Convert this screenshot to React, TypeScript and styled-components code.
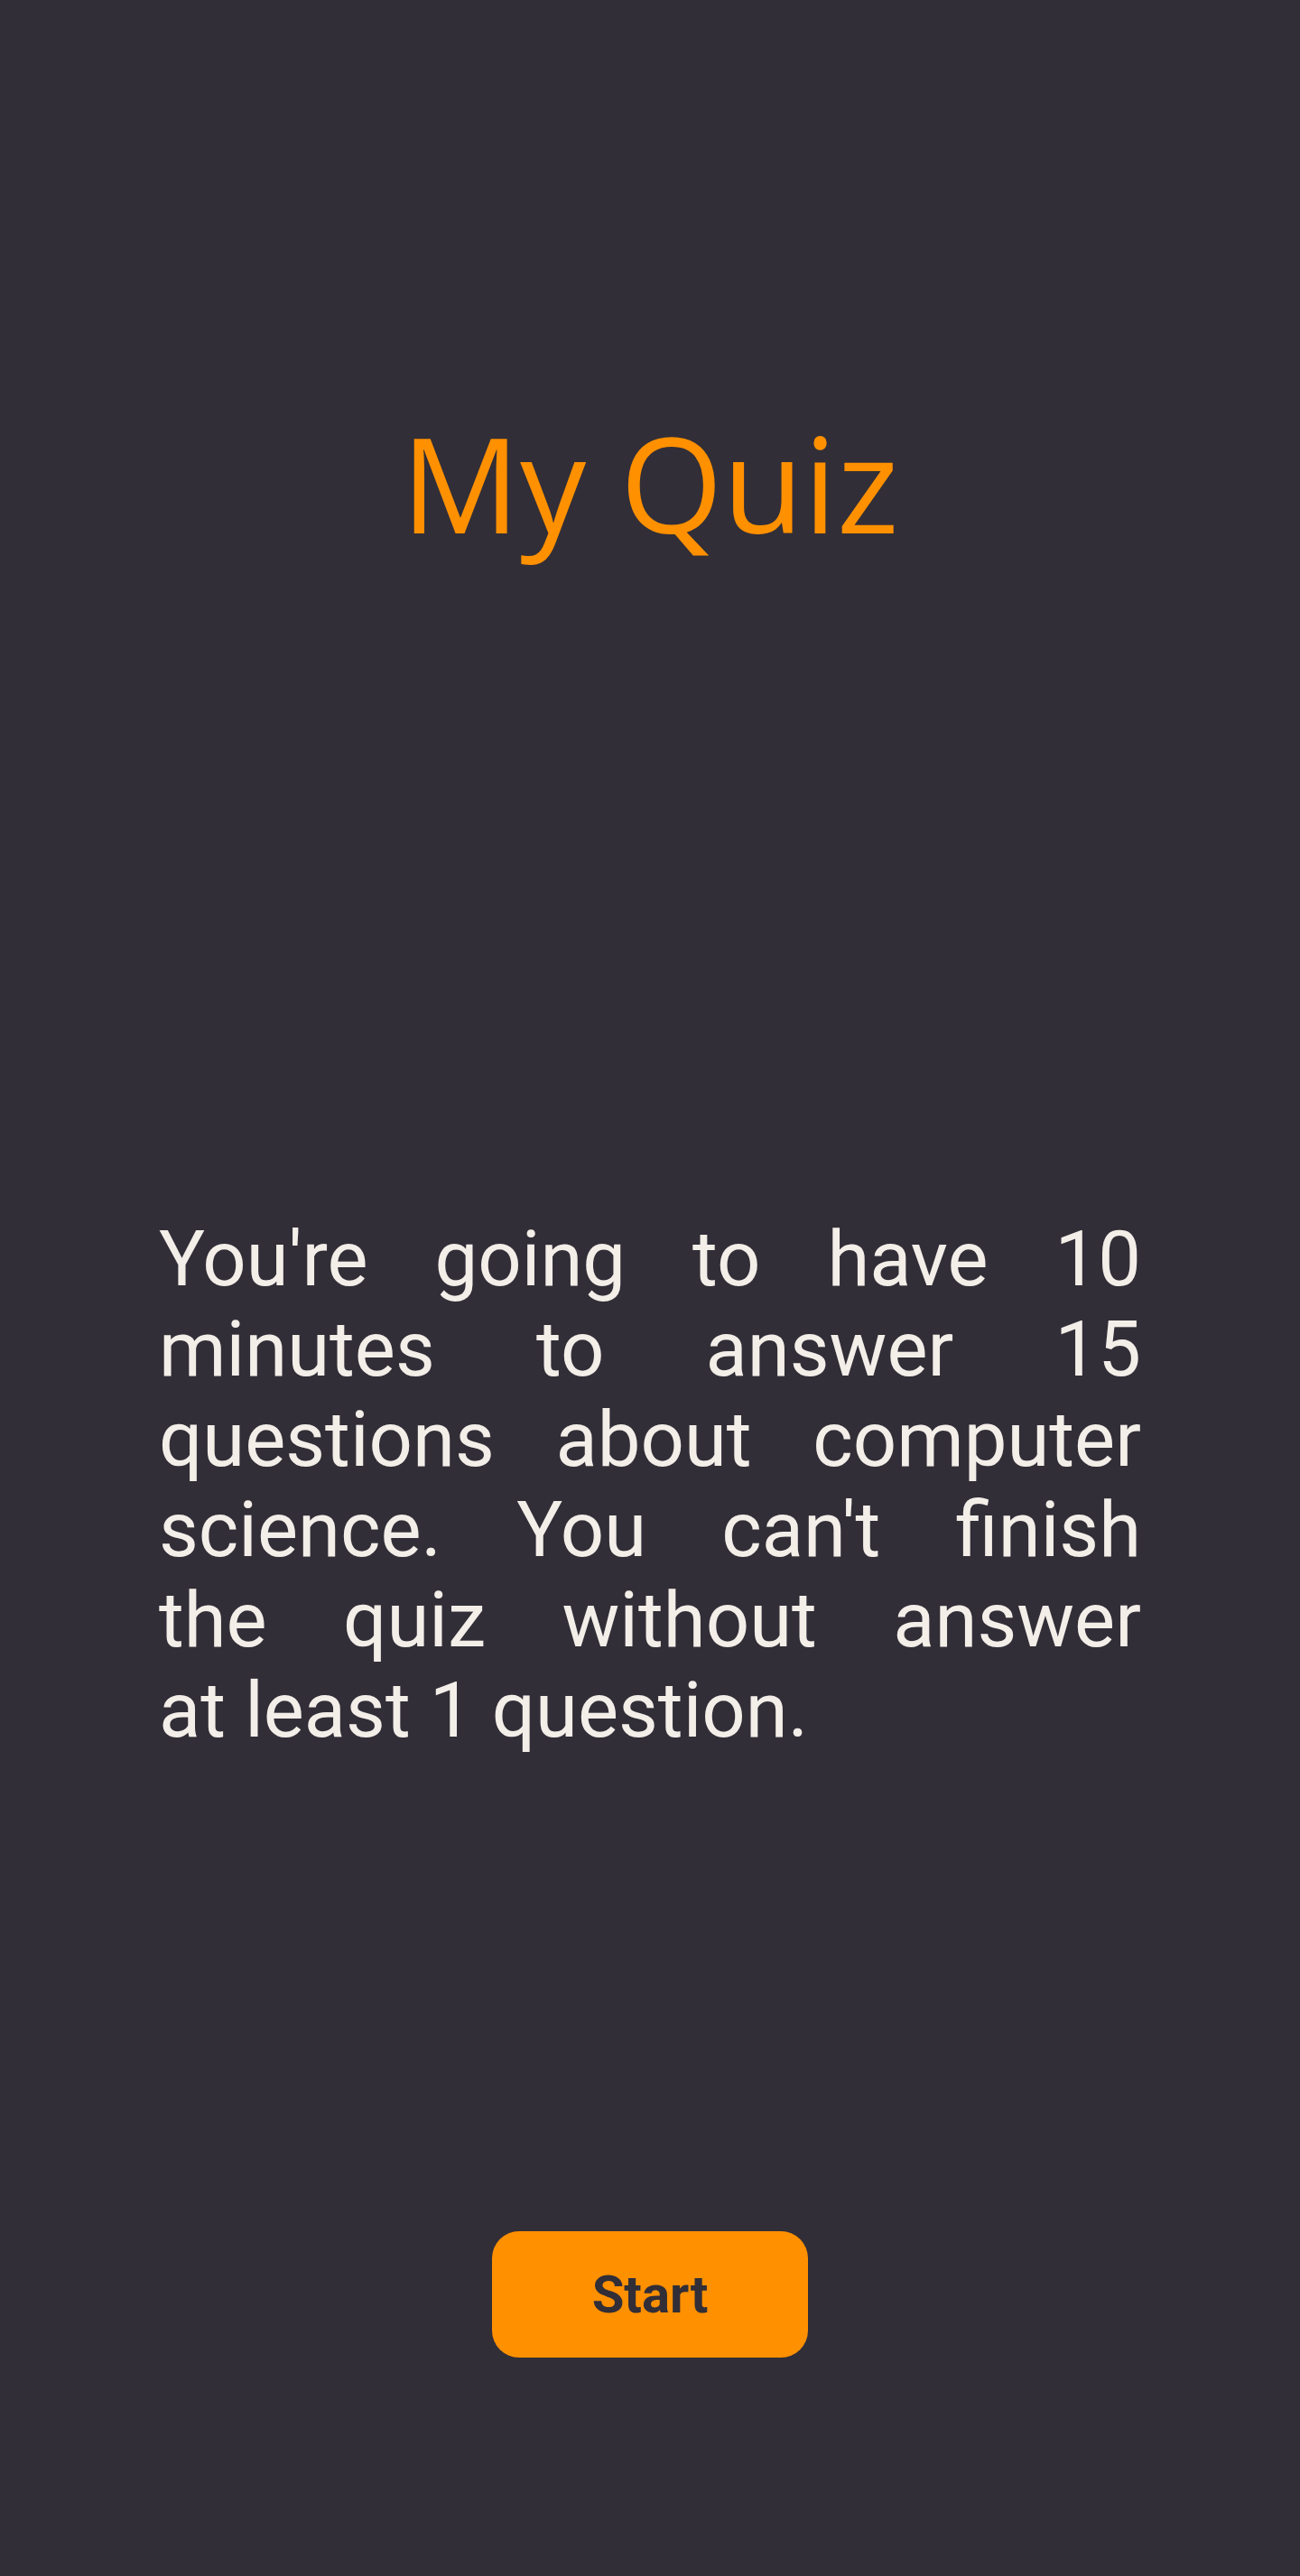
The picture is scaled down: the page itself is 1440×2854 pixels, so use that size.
import React from "react";
import styled, { createGlobalStyle } from "styled-components";

const GlobalStyle = createGlobalStyle`
  html, body {
    margin: 0;
    padding: 0;
    background: #312e37;
  }
  body {
    font-family: Roboto, "Liberation Sans", sans-serif;
  }
  * { box-sizing: border-box; }
`;

const Page = styled.main`
  min-height: 2854px;
  display: flex;
  flex-direction: column;
  align-items: center;
  padding-top: 435px;
  background: #312e37;
`;

const Title = styled.h1`
  margin: 0;
  font-family: "Open Sans", "Noto Sans", sans-serif;
  font-weight: 400;
  font-size: 146px;
  line-height: 200px;
  color: #ff9000;
`;

const Intro = styled.p`
  margin: 710px 0 0;
  width: 1088px;
  font-family: Roboto, "Liberation Sans", sans-serif;
  font-size: 85px;
  line-height: 100px;
  color: #f4eee9;
`;

const Line = styled.span<{ $last?: boolean }>`
  display: block;
  white-space: nowrap;
  text-align: ${(p) => (p.$last ? "left" : "justify")};
  text-align-last: ${(p) => (p.$last ? "left" : "justify")};
`;

const StartButton = styled.button`
  margin-top: 527px;
  width: 350px;
  height: 140px;
  border: none;
  border-radius: 30px;
  background: #ff9000;
  color: #312e37;
  font-family: Roboto, "Liberation Sans", sans-serif;
  font-weight: 700;
  font-size: 58px;
  cursor: pointer;
  display: flex;
  align-items: center;
  justify-content: center;
`;

const introLines = [
  "You're going to have 10",
  "minutes to answer 15",
  "questions about computer",
  "science. You can't finish",
  "the quiz without answer",
  "at least 1 question.",
];

export default function App() {
  return (
    <>
      <GlobalStyle />
      <Page>
        <Title>My Quiz</Title>
        <Intro>
          {introLines.map((line, i) => (
            <Line key={i} $last={i === introLines.length - 1}>
              {line}
            </Line>
          ))}
        </Intro>
        <StartButton>Start</StartButton>
      </Page>
    </>
  );
}
